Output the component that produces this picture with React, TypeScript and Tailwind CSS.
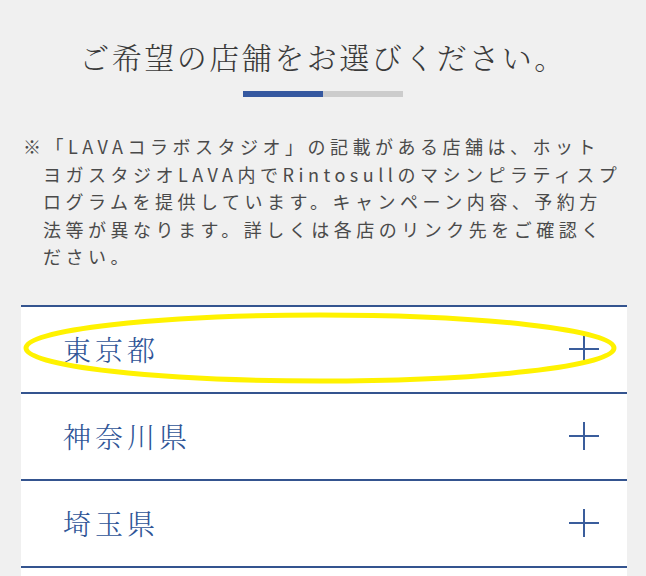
import React from "react";

const PlusIcon = () => (
  <svg width="30" height="28" viewBox="0 0 30 28" className="shrink-0">
    <line x1="0" y1="14" x2="30" y2="14" stroke="#3a5d9c" strokeWidth="2" />
    <line x1="15" y1="0" x2="15" y2="28" stroke="#3a5d9c" strokeWidth="2" />
  </svg>
);

const prefectures = ["東京都", "神奈川県", "埼玉県", "千葉県"];

export default function App() {
  return (
    <div
      className="w-[646px] h-[576px] overflow-hidden bg-[#f0f0f0]"
      style={{ fontFamily: '"Noto Sans CJK JP", "Noto Sans", sans-serif' }}
    >
      <h1
        className="pt-[41px] text-center text-[30px] leading-[30px] tracking-[2.5px] font-light text-[#3a3a3a] whitespace-nowrap"
        style={{ fontFamily: '"Noto Serif CJK JP", "Noto Sans CJK JP", serif' }}
      >
        ご希望の店舗をお選びください。
      </h1>
      <div className="mt-[20px] flex justify-center">
        <div className="w-[80px] h-[6px] bg-[#3558a0]" />
        <div className="w-[80px] h-[6px] bg-[#cccccc]" />
      </div>
      <p className="mt-[36px] pl-[43px] indent-[-20px] text-[18px] leading-[27.5px] tracking-[4.5px] text-[#4a4a4a] whitespace-nowrap">
        ※「LAVAコラボスタジオ」の記載がある店舗は、ホット
        <br />
        ヨガスタジオLAVA内でRintosullのマシンピラティスプ
        <br />
        ログラムを提供しています。キャンペーン内容、予約方
        <br />
        法等が異なります。詳しくは各店のリンク先をご確認く
        <br />
        ださい。
      </p>
      <div className="mt-[34px] ml-[21px] w-[606px] bg-white">
        {prefectures.map((name, i) => (
          <div
            key={name}
            className="relative h-[87px] border-t-2 border-[#34548f] flex items-center justify-between pl-[42px] pr-[28px]"
          >
            <span
              className="text-[28px] leading-[28px] tracking-[4px] font-light text-[#2f5597]"
              style={{ fontFamily: '"Noto Serif CJK JP", "Noto Sans CJK JP", serif' }}
            >
              {name}
            </span>
            <PlusIcon />
            {i === 0 && (
              <svg
                width="606"
                height="87"
                viewBox="0 0 606 87"
                className="absolute left-0 top-[-2px] overflow-visible pointer-events-none"
              >
                <ellipse
                  cx="299"
                  cy="43"
                  rx="294"
                  ry="33"
                  fill="none"
                  stroke="#fff200"
                  strokeWidth="5"
                />
              </svg>
            )}
          </div>
        ))}
      </div>
    </div>
  );
}
